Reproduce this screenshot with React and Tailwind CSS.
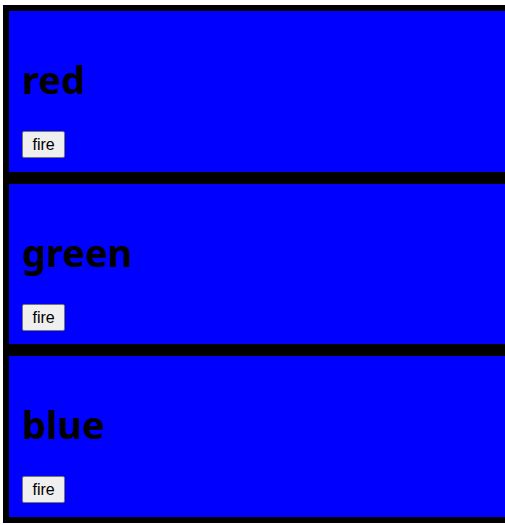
export default function App() {
  const items = [
    { name: "red", pb: "pb-[14px]" },
    { name: "green", pb: "pb-[13px]" },
    { name: "blue", pb: "pb-[14px]" },
  ];
  return (
    <div className="w-[505px] h-[525px] overflow-hidden bg-white pt-[5px] pl-[3px]">
      <div className="w-[520px] flex flex-col">
        {items.map((it) => (
          <div
            key={it.name}
            className={`border-[6px] border-black bg-[#0000ff] px-[13px] pt-[46px] flex flex-col items-start ${it.pb}`}
          >
            <h1 className="m-0 text-[38px] leading-[44px] font-bold text-black [font-family:'Noto_Sans',sans-serif]">
              {it.name}
            </h1>
            <button className="mt-[30px] h-[27px] px-[9.5px] bg-[#efefef] border border-[#767676] rounded-[2px] text-[16px] leading-[18px] text-black [font-family:'Liberation_Sans',Arial,sans-serif]">
              fire
            </button>
          </div>
        ))}
      </div>
    </div>
  );
}
